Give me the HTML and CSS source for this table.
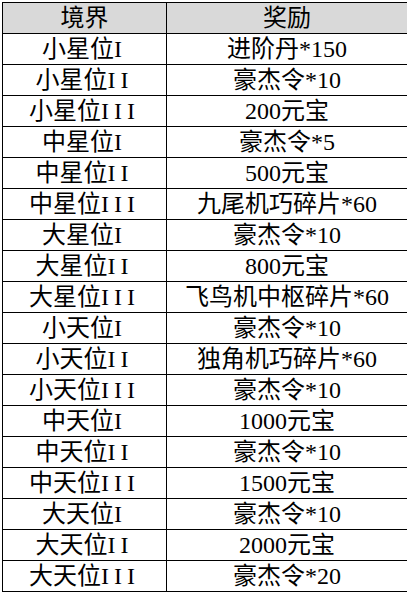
FILE: index.html
```html
<!DOCTYPE html>
<html lang="zh">
<head>
<meta charset="utf-8">
<link rel="stylesheet" href="styles.css">
</head>
<body>
<table class="rewards">
  <thead>
    <tr><th class="c1">境界</th><th class="c2">奖励</th></tr>
  </thead>
  <tbody>
    <tr><td>小星位<span class="rn">I</span></td><td>进阶丹*150</td></tr>
    <tr><td>小星位<span class="rn">II</span></td><td>豪杰令*10</td></tr>
    <tr><td>小星位<span class="rn">III</span></td><td>200元宝</td></tr>
    <tr><td>中星位<span class="rn">I</span></td><td>豪杰令*5</td></tr>
    <tr><td>中星位<span class="rn">II</span></td><td>500元宝</td></tr>
    <tr><td>中星位<span class="rn">III</span></td><td>九尾机巧碎片*60</td></tr>
    <tr><td>大星位<span class="rn">I</span></td><td>豪杰令*10</td></tr>
    <tr><td>大星位<span class="rn">II</span></td><td>800元宝</td></tr>
    <tr><td>大星位<span class="rn">III</span></td><td>飞鸟机中枢碎片*60</td></tr>
    <tr><td>小天位<span class="rn">I</span></td><td>豪杰令*10</td></tr>
    <tr><td>小天位<span class="rn">II</span></td><td>独角机巧碎片*60</td></tr>
    <tr><td>小天位<span class="rn">III</span></td><td>豪杰令*10</td></tr>
    <tr><td>中天位<span class="rn">I</span></td><td>1000元宝</td></tr>
    <tr><td>中天位<span class="rn">II</span></td><td>豪杰令*10</td></tr>
    <tr><td>中天位<span class="rn">III</span></td><td>1500元宝</td></tr>
    <tr><td>大天位<span class="rn">I</span></td><td>豪杰令*10</td></tr>
    <tr><td>大天位<span class="rn">II</span></td><td>2000元宝</td></tr>
    <tr><td>大天位<span class="rn">III</span></td><td>豪杰令*20</td></tr>
  </tbody>
</table>
</body>
</html>
```
FILE: styles.css
```css
html, body {
  margin: 0;
  padding: 0;
  background: #ffffff;
}
body {
  padding: 2px 0 0 2px;
  font-family: "Liberation Serif", "Noto Sans CJK SC", serif;
  color: #000000;
}
.rewards {
  border-collapse: collapse;
  width: 404px;
  table-layout: fixed;
}
.rewards th,
.rewards td {
  border: 1px solid #000000;
  height: 30px;
  padding: 0;
  text-align: center;
  vertical-align: middle;
  font-size: 24px;
  font-weight: normal;
  line-height: 30px;
  white-space: nowrap;
}
.rewards th {
  background: #d9d9d9;
}
.c1 {
  width: 163px;
}
.c2 {
  width: 240px;
}
.rn {
  letter-spacing: 5px;
}
```
